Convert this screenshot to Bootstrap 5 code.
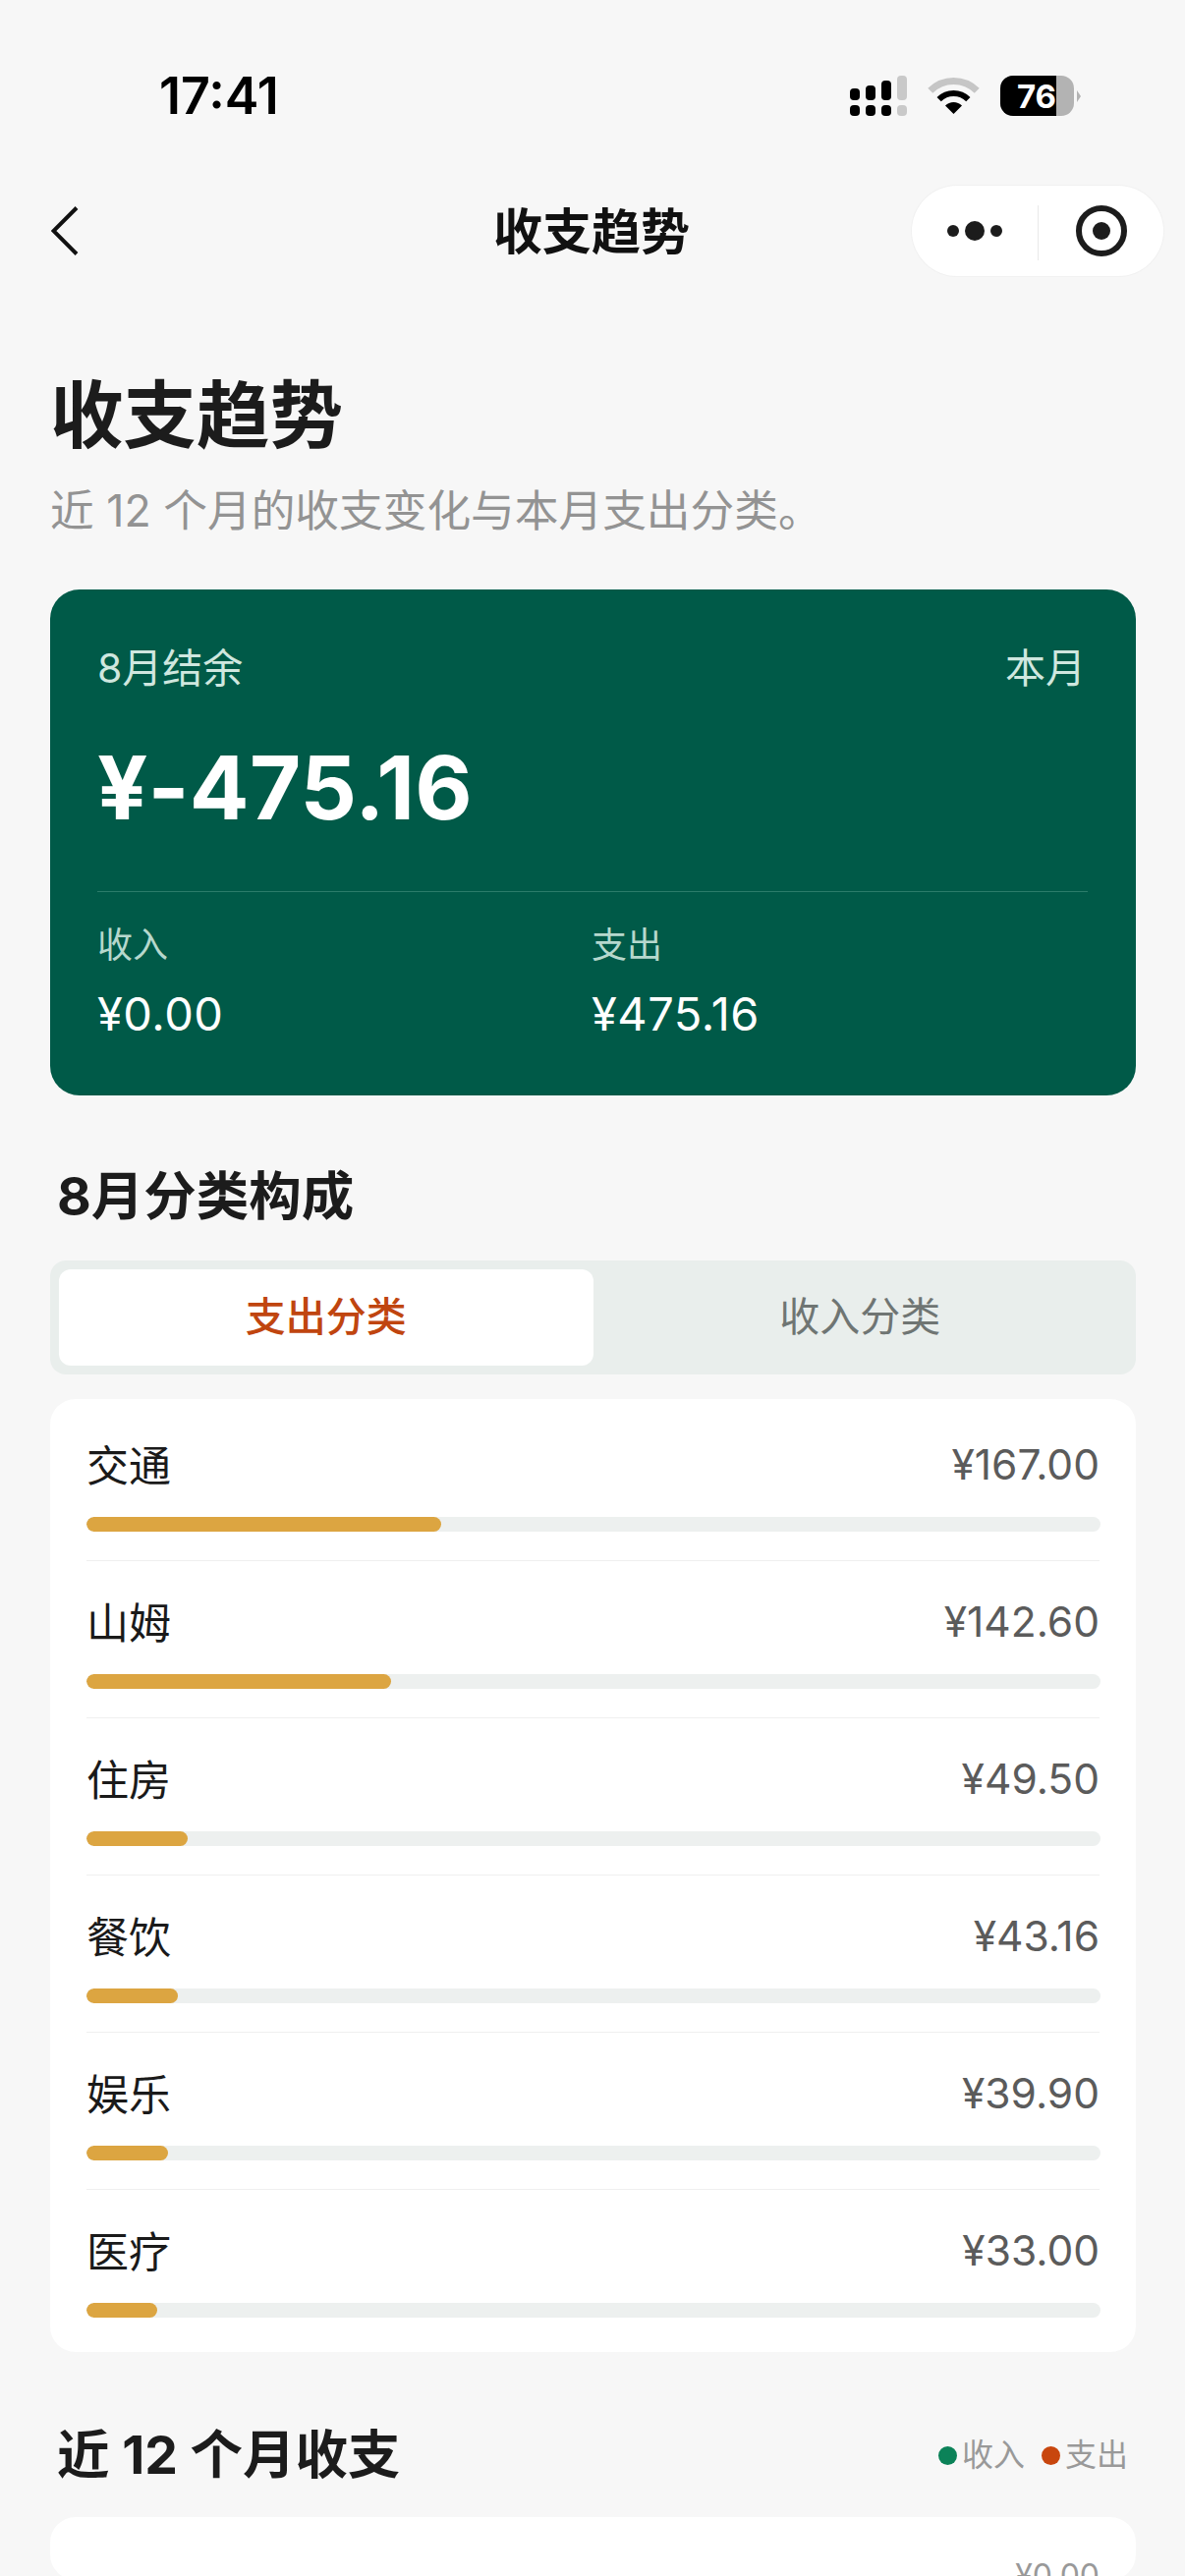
<!DOCTYPE html>
<html lang="zh"><head><meta charset="utf-8">
<link rel="stylesheet" href="https://cdn.jsdelivr.net/npm/bootstrap@5.3.0/dist/css/bootstrap.min.css">
<style>
html,body{background:#f7f7f7;height:2622px;overflow:hidden;}
body{width:1206px;font-family:Inter,"Noto Sans CJK SC",sans-serif;color:#1c1c1c;}
.phone-status{height:189px;padding:63px 0 0 162px;align-items:flex-start;}
.phone-time{font-size:52px;font-weight:600;line-height:70px;color:#000;width:703px;}
.status-icons{margin-top:14px;}
.batt-num{font-family:Inter,sans-serif;font-weight:700;font-size:33px;fill:#fff;}
.title-bar{height:92px;position:relative;}
.back-ico{margin-left:52px;width:28px;height:50px;}
.bar-title{position:absolute;left:0;right:2px;top:0;line-height:94px;text-align:center;font-size:50px;font-weight:600;color:#111;}
.capsule{position:absolute;left:928px;top:0;width:256px;height:92px;background:#fff;border-radius:46px;box-shadow:0 0 0 1px #f1f1f1;}
.main-wrap{padding:0 50px 0 51px;}
.big-title{font-size:74.5px;font-weight:700;line-height:100px;margin:92px 0 0 0;}
.sub-title{font-size:44.7px;line-height:60px;color:#939393;margin:17px 0 50px 0;}
.hero{background:#005a48;border-radius:30px;height:515px;padding:51px 51px 51px 48px;color:#fff;}
.hero-top{font-size:41px;line-height:58px;color:#cfe7df;}
.hero-amt{font-size:90px;font-weight:700;line-height:100px;letter-spacing:.2px;margin-top:43px;}
.hero-rule{border-top:1px solid #2b7c6a;margin:55px -2px 35px 0;}
.hero-lab{font-size:36px;line-height:38px;color:#b6d8cd;}
.hero-val{font-size:47px;line-height:60px;margin-top:21px;letter-spacing:.5px;}
.hero-col{width:503px;}
.sec-title{font-size:53.5px;font-weight:700;line-height:70px;margin:0 0 0 7px;}
.sec-one{margin-top:68px;}
.seg{background:#e9eeec;border-radius:16px;height:116px;padding:9px;margin-top:30px;}
.seg-btn{flex:1 1 50%;height:98px;border:0;border-radius:12px;background:transparent;font-size:41px;font-weight:400;color:#6f7573;padding:0 0 1px;}
.seg-on{background:#fff;color:#c0450f;font-weight:500;}
.cat-card{background:#fff;border:0;border-radius:26px;margin-top:25px;padding:5px 37px 0;height:970px;}
.cat-row{height:160px;border:0;border-bottom:1px solid #efefef;padding:0;background:transparent;}
.cat-row:last-child{border-bottom:0;}
.cat-name{font-size:43px;line-height:60px;padding-top:33px;height:93px;color:#1a1a1a;}
.cat-amt{font-size:42.5px;line-height:60px;color:#5b5b5b;padding-top:32px;}
.cat-track{height:15px;background:#edf0ef;border-radius:8px;margin-top:22px;margin-right:-1px;}
.cat-fill{background:#dca541;border-radius:8px;}
.sec-two{margin-top:70px;}
.legend{font-size:32px;color:#999;line-height:46px;margin-right:8px;}
.dot{width:19px;height:19px;border-radius:50%;display:inline-block;margin-right:5px;}
.dot-in{background:#0b8258;}
.dot-out{background:#c8460e;margin-left:17px;}
.chart-card{background:#fff;border:0;border-radius:26px;margin-top:28px;height:64px;padding:40px 37px 0;text-align:right;font-size:32px;line-height:40px;color:#999;overflow:hidden;}
</style></head>
<body>
<div class="d-flex phone-status">
  <div class="phone-time">17:41</div>
  <svg class="status-icons" width="236" height="41" viewBox="0 0 236 41">
    <rect x="0" y="13" width="10" height="12" rx="4" fill="#000"/><rect x="16" y="10" width="10" height="15" rx="4" fill="#000"/><rect x="32" y="5" width="10" height="20" rx="4" fill="#000"/><rect x="48" y="0" width="10" height="25" rx="4" fill="#c9c9c9"/>
    <rect x="0" y="30" width="10" height="11" rx="4" fill="#000"/><rect x="16" y="30" width="10" height="11" rx="4" fill="#000"/><rect x="32" y="30" width="10" height="11" rx="4" fill="#000"/><rect x="48" y="30" width="10" height="11" rx="4" fill="#c9c9c9"/>
    <path d="M81.8 15.3A33.5 33.5 0 0 1 129.2 15.3" fill="none" stroke="#c6c6c6" stroke-width="7"/>
    <path d="M90.65 24.15A21 21 0 0 1 120.35 24.15" fill="none" stroke="#000" stroke-width="6"/>
    <path d="M105.5 39 97 30.5A12 12 0 0 1 114 30.5Z" fill="#000"/>
    <rect x="153" y="0" width="75" height="41" rx="13" fill="#b3b3b3"/>
    <path d="M166 0H210V41H166A13 13 0 0 1 153 28V13A13 13 0 0 1 166 0Z" fill="#000"/>
    <path d="M231 15 235 21 231 27Z" fill="#b3b3b3"/>
    <text class="batt-num" x="190" y="33" text-anchor="middle">76</text>
  </svg>
</div>
<div class="title-bar d-flex align-items-center">
  <svg class="back-ico" viewBox="0 0 28 50"><path d="M26 1.5 2.5 25 26 48.5" fill="none" stroke="#111" stroke-width="4"/></svg>
  <div class="bar-title">收支趋势</div>
  <div class="capsule">
    <svg width="256" height="92" viewBox="0 0 256 92">
      <circle cx="42" cy="46" r="6" fill="#1c1c1c"/><circle cx="64" cy="46" r="10" fill="#1c1c1c"/><circle cx="86" cy="46" r="6" fill="#1c1c1c"/>
      <rect x="128" y="20" width="1" height="56" fill="#e9e9e9"/>
      <circle cx="193" cy="46" r="23" fill="none" stroke="#1c1c1c" stroke-width="6"/><circle cx="193" cy="46" r="9" fill="#1c1c1c"/>
    </svg>
  </div>
</div>
<div class="main-wrap">
  <h1 class="big-title">收支趋势</h1>
  <p class="sub-title">近 12 个月的收支变化与本月支出分类。</p>
  <div class="hero">
    <div class="d-flex justify-content-between hero-top"><span>8月结余</span><span>本月</span></div>
    <div class="hero-amt">¥-475.16</div>
    <div class="hero-rule"></div>
    <div class="d-flex">
      <div class="hero-col"><div class="hero-lab">收入</div><div class="hero-val">¥0.00</div></div>
      <div class="hero-col"><div class="hero-lab">支出</div><div class="hero-val">¥475.16</div></div>
    </div>
  </div>
  <div class="sec-title sec-one">8月分类构成</div>
  <div class="d-flex seg"><button class="seg-btn seg-on">支出分类</button><button class="seg-btn">收入分类</button></div>
  <div class="list-group cat-card">
    <div class="list-group-item cat-row"><div class="d-flex justify-content-between"><span class="cat-name">交通</span><span class="cat-amt">¥167.00</span></div><div class="progress cat-track"><div class="progress-bar cat-fill" style="width:35%"></div></div></div>
    <div class="list-group-item cat-row"><div class="d-flex justify-content-between"><span class="cat-name">山姆</span><span class="cat-amt">¥142.60</span></div><div class="progress cat-track"><div class="progress-bar cat-fill" style="width:30%"></div></div></div>
    <div class="list-group-item cat-row"><div class="d-flex justify-content-between"><span class="cat-name">住房</span><span class="cat-amt">¥49.50</span></div><div class="progress cat-track"><div class="progress-bar cat-fill" style="width:10%"></div></div></div>
    <div class="list-group-item cat-row"><div class="d-flex justify-content-between"><span class="cat-name">餐饮</span><span class="cat-amt">¥43.16</span></div><div class="progress cat-track"><div class="progress-bar cat-fill" style="width:9%"></div></div></div>
    <div class="list-group-item cat-row"><div class="d-flex justify-content-between"><span class="cat-name">娱乐</span><span class="cat-amt">¥39.90</span></div><div class="progress cat-track"><div class="progress-bar cat-fill" style="width:8%"></div></div></div>
    <div class="list-group-item cat-row"><div class="d-flex justify-content-between"><span class="cat-name">医疗</span><span class="cat-amt">¥33.00</span></div><div class="progress cat-track"><div class="progress-bar cat-fill" style="width:7%"></div></div></div>
  </div>
  <div class="d-flex justify-content-between align-items-center sec-two">
    <div class="sec-title">近 12 个月收支</div>
    <div class="legend d-flex align-items-center"><span class="dot dot-in"></span>收入<span class="dot dot-out"></span>支出</div>
  </div>
  <div class="card chart-card">¥0.00</div>
</div>
</body></html>
